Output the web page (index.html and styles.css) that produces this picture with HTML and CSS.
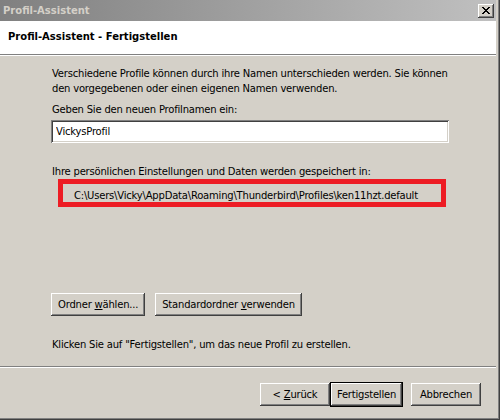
FILE: index.html
```html
<!DOCTYPE html>
<html lang="de">
<head>
    <meta charset="UTF-8">
    <title>Profil-Assistent</title>
    <link rel="stylesheet" href="styles.css">
</head>
<body>
    <div class="window">
        <div class="titlebar">
            <span class="title">Profil-Assistent</span>
            <button class="close" type="button">
                <svg width="8" height="7" viewBox="0 0 8 7">
                    <path d="M0 0h2v1h1v1h2V1h1V0h2v1H7v1H6v1H5v1h1v1h1v1h1v1H6V6H5V5H3v1H2v1H0V6h1V5h1V4h1V3H2V2H1V1H0z" fill="#000"/>
                </svg>
            </button>
        </div>

        <div class="header">Profil-Assistent - Fertigstellen</div>

        <div class="content">
            <p class="intro">Verschiedene Profile können durch ihre Namen unterschieden werden. Sie können den vorgegebenen oder einen eigenen Namen verwenden.</p>

            <label class="prompt" for="profile_name">Geben Sie den neuen Profilnamen ein:</label>
            <input class="field" type="text" id="profile_name" value="VickysProfil">

            <p class="location">Ihre persönlichen Einstellungen und Daten werden gespeichert in:</p>
            <div class="path-box">C:\Users\Vicky\AppData\Roaming\Thunderbird\Profiles\ken11hzt.default</div>

            <div class="folder-buttons">
                <button class="btn" type="button">Ordner <u>w</u>ählen...</button>
                <button class="btn" type="button">Standardordner <u>v</u>erwenden</button>
            </div>

            <p class="hint">Klicken Sie auf "Fertigstellen", um das neue Profil zu erstellen.</p>
        </div>

        <div class="footer">
            <button class="btn btn-nav" type="button">&lt; <u>Z</u>urück</button>
            <button class="btn btn-nav btn-primary" type="button">Fertigstellen</button>
            <button class="btn btn-nav btn-cancel" type="button">Abbrechen</button>
        </div>
    </div>
</body>
</html>
```

FILE: styles.css
```css
* {
    margin: 0;
    padding: 0;
    box-sizing: border-box;
}

body {
    width: 500px;
    height: 420px;
    overflow: hidden;
    background: #d4d0c8;
    font-family: 'DejaVu Sans', sans-serif;
    font-size: 10px;
    letter-spacing: -0.2px;
    color: #000;
}

/* Classic window frame, right and bottom edges only */
.window {
    width: 500px;
    height: 420px;
    padding: 0 4px 4px 0;
    background: #d4d0c8;
    box-shadow: inset -1px -1px #404040, inset -2px -2px #808080;
}

.titlebar {
    height: 21px;
    display: flex;
    align-items: center;
    justify-content: space-between;
    padding: 0 2px 0 3px;
    background: linear-gradient(to right, #808080, #c0c0c0);
}

.title {
    font-weight: bold;
    letter-spacing: 0;
    color: #d4d0c8;
}

.close {
    width: 16px;
    height: 14px;
    display: flex;
    align-items: center;
    justify-content: center;
    border: none;
    background: #d4d0c8;
    box-shadow: inset -1px -1px #404040, inset 1px 1px #fff, inset -2px -2px #808080;
}

.header {
    height: 34px;
    padding: 9px 0 0 8px;
    background: #fff;
    font-weight: bold;
    letter-spacing: 0;
    line-height: 14px;
    border-bottom: 1px solid #808080;
    box-shadow: 0 1px #fff;
}

.content {
    height: 311px;
    padding: 11px 40px 0 52px;
    display: flex;
    flex-direction: column;
    align-items: flex-start;
    line-height: 15px;
}

.prompt {
    margin-top: 6px;
}

/* Sunken text field */
.field {
    width: 398px;
    height: 23px;
    margin: 3px 0 0 -1px;
    padding: 0 5px;
    border: none;
    background: #fff;
    font: inherit;
    letter-spacing: inherit;
    box-shadow: inset 1px 1px #808080, inset -1px -1px #fff, inset 2px 2px #404040, inset -2px -2px #d4d0c8;
}

.location {
    margin-top: 21px;
}

.path-box {
    width: 388px;
    height: 28px;
    margin-left: 6px;
    padding: 4px 0 0 11px;
    border: 5px solid #ed1c24;
}

.folder-buttons {
    display: flex;
    gap: 10px;
    margin: 86px 0 0 -1px;
}

.hint {
    margin-top: 21px;
}

/* Raised push buttons */
.btn {
    height: 23px;
    padding: 0 7px;
    border: none;
    background: #d4d0c8;
    font: inherit;
    letter-spacing: inherit;
    color: #000;
    box-shadow: inset -1px -1px #404040, inset 1px 1px #fff, inset -2px -2px #808080;
}

.footer {
    height: 50px;
    display: flex;
    justify-content: flex-end;
    align-items: flex-start;
    padding: 16px 15px 0 0;
    border-top: 1px solid #808080;
    box-shadow: inset 0 1px #fff;
}

.btn-nav {
    width: 70px;
    padding: 0;
}

.btn-primary {
    width: 73px;
    height: 25px;
    margin-top: -1px;
    border: 1px solid #000;
}

.btn-cancel {
    margin-left: 8px;
}
```
